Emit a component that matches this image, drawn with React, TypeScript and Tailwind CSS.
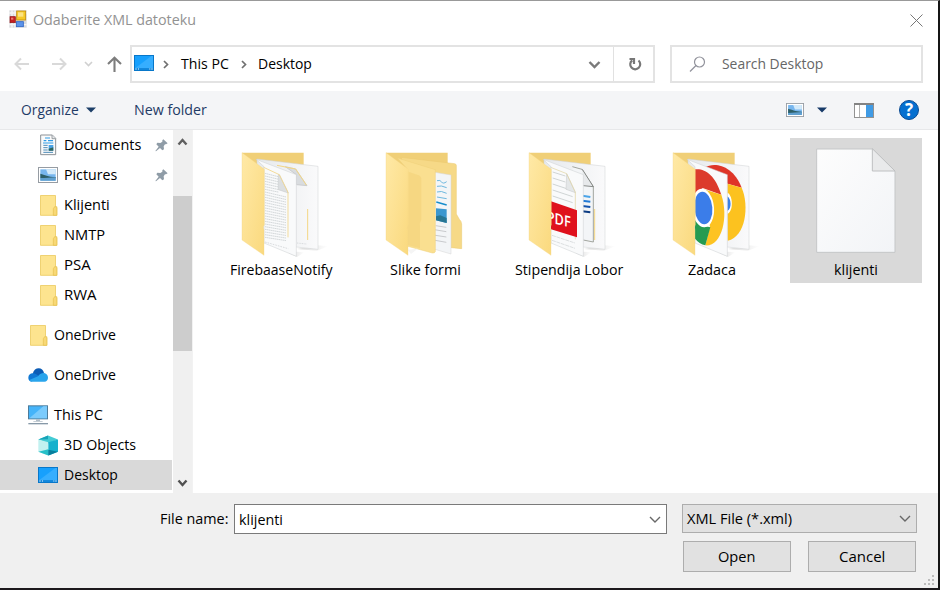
import { useLayoutEffect, useRef, useState, type ReactNode } from "react";

/** Text squeezed horizontally to an exact advance width. */
function Fit({ w, children, className = "" }: { w: number; children: string; className?: string }) {
  const ref = useRef<HTMLSpanElement>(null);
  const [scale, setScale] = useState(1);
  useLayoutEffect(() => {
    if (ref.current) setScale(w / ref.current.offsetWidth);
  }, [w, children]);
  return (
    <span className={`inline-block shrink-0 ${className}`} style={{ width: w }}>
      <span
        ref={ref}
        className="inline-block origin-left whitespace-nowrap"
        style={{ transform: `translateY(-1px) scaleX(${scale})` }}
      >
        {children}
      </span>
    </span>
  );
}

function AppIcon() {
  return (
    <svg width="18" height="18" viewBox="0 0 54 54" className="shrink-0">
      <rect x="1" y="1" width="52" height="52" fill="#d8dadd" />
      <path d="M1 9H53M1 44H53M9 1V53M18 1V53" stroke="#f6f6f6" strokeWidth="4" />
      <rect x="3" y="20" width="16" height="18" fill="#c51f20" stroke="#8e1010" strokeWidth="2" />
      <rect x="6" y="23" width="7" height="6" fill="#ee7a6d" />
      <rect x="23" y="3" width="27" height="27" fill="#f5c928" stroke="#c28e0c" strokeWidth="2.5" />
      <rect x="27" y="7" width="16" height="13" fill="#fbe383" />
      <rect x="22" y="35" width="21" height="15" fill="#5b93ea" stroke="#2f66c4" strokeWidth="2.5" />
    </svg>
  );
}

function DesktopIcon() {
  return (
    <svg width="20" height="16" viewBox="0 0 60 48" preserveAspectRatio="none" className="shrink-0">
      <rect x="1.5" y="1.5" width="57" height="45" fill="#17a0fd" stroke="#0877c9" strokeWidth="3" />
      <path d="M3 40L52 3H57V40Z" fill="#36aeff" />
      <path d="M3 42H57" stroke="#0b6fbd" strokeWidth="3" />
      <path d="M4 42H8M12 42H15M46 42H49M52 42H56" stroke="#e8f5ff" strokeWidth="3" />
    </svg>
  );
}

function FolderIcon() {
  return (
    <svg width="20" height="22" viewBox="0 0 60 66" className="shrink-0">
      <path d="M7.500 4.500H52.500V38L56.500 41V64H7.500Z" fill="#fde48f" stroke="#eccb62" strokeWidth="2.500" />
      <path d="M46 64V44L50 38H56.500V64Z" fill="#f8d875" stroke="#e5bf4b" strokeWidth="2" />
    </svg>
  );
}

function DocumentIcon() {
  return (
    <svg width="20" height="22" viewBox="0 0 60 66" className="shrink-0">
      <path d="M8 3H43L53 13V62H8Z" fill="#fafafa" stroke="#8b9196" strokeWidth="3" />
      <path d="M42 3V14H53" fill="#e6e8ea" stroke="#8b9196" strokeWidth="2.500" />
      <path d="M21 12H36M17 20H25M30 20H45M15 27H46" stroke="#2e9be6" strokeWidth="3.500" />
      <path d="M16 34H29M16 41H29M16 48H29M16 55H45" stroke="#4c8bb8" strokeWidth="3" />
      <rect x="32" y="33" width="14" height="17" fill="#4aa3e6" />
      <path d="M32 44L46 40V50H32Z" fill="#2d655c" />
    </svg>
  );
}

function PictureIcon({ w = 20, h = 16 }: { w?: number; h?: number }) {
  return (
    <svg width={w} height={h} viewBox="0 0 60 48" preserveAspectRatio="none" className="shrink-0">
      <rect x="1.500" y="1.500" width="57" height="45" fill="#fff" stroke="#969ca3" strokeWidth="3" />
      <rect x="7" y="7" width="46" height="34" fill="#77b6ee" />
      <path d="M24 7H53V22H30Z" fill="#d3eafa" />
      <path d="M7 20C20 23 30 30 53 30V34H7Z" fill="#2d5f68" />
      <path d="M7 34L53 31V41H7Z" fill="#5f9fcf" />
    </svg>
  );
}

function CloudIcon() {
  return (
    <svg width="20" height="14" viewBox="0 0 60 42" className="shrink-0">
      <path d="M14 17C17 6 24 1 32 1C40 1 46 7 48 15L30 30Z" fill="#0b5cb5" />
      <path d="M1 29C1 20 8 15 16 16C22 16 26 20 36 26L10 41C4 39 1 35 1 29Z" fill="#0f78d4" />
      <path d="M30 25C36 16 43 14 49 15C56 17 60 22 60 29C60 36 56 41 49 41H13C8 41 5 38 4 36Z" fill="#2aa5ec" />
    </svg>
  );
}

function PcIcon() {
  return (
    <svg width="20" height="20" viewBox="0 0 60 60" className="shrink-0">
      <rect x="1.500" y="2.500" width="57" height="39" fill="#45b4fa" stroke="#4d7b99" strokeWidth="3" />
      <path d="M4 40L46 4H57V40Z" fill="#7bcbfc" />
      <path d="M24 43H36V48H44V50H16V48H24Z" fill="#b2bec8" />
      <path d="M1 56H60" stroke="#8799a8" strokeWidth="4" />
    </svg>
  );
}

function CubeIcon() {
  return (
    <svg width="20" height="21" viewBox="0 0 60 62" className="shrink-0">
      <path d="M1 13L30 1L60 13L31 25Z" fill="#43cbd4" />
      <path d="M1 13L31 21V61L1 50Z" fill="#c2f1f0" />
      <path d="M31 21L60 13V50L31 61Z" fill="#16b1cd" />
      <path d="M1 50L31 42V61Z" fill="#27c0c8" />
      <path d="M31 44L60 50L31 61Z" fill="#087f9d" />
      <path d="M1 13L30 1V12Z" fill="#18a3b8" />
    </svg>
  );
}

function PinIcon() {
  return (
    <svg width="13" height="13" viewBox="0 0 39 39" className="shrink-0">
      <path d="M25 1L38 13L33 16L30 16L26 22L27 31L22 34L15 27L3 37L1 36L11 23L4 16L7 11L16 12L22 8L22 4Z" fill="#8f9ca7" />
    </svg>
  );
}

function Chevron({ className, d, w, h, sw }: { className: string; d: string; w: number; h: number; sw: number }) {
  return (
    <svg width={w} height={h} viewBox={`0 0 ${w} ${h}`} className={`shrink-0 ${className}`} fill="none" stroke="currentColor" strokeWidth={sw}>
      <path d={d} />
    </svg>
  );
}

function BackPanel() {
  return (
    <>
      <defs>
        <linearGradient id="flap" x1="0" y1="0" x2="1" y2="1">
          <stop offset="0" stopColor="#ffe9a6" />
          <stop offset="1" stopColor="#fad97e" />
        </linearGradient>
        <linearGradient id="sheet" x1="0" y1="0" x2="1" y2="0">
          <stop offset="0" stopColor="#e6e9ec" />
          <stop offset="1" stopColor="#fafafb" />
        </linearGradient>
        <linearGradient id="shade" x1="0" y1="0" x2="1" y2="0">
          <stop offset="0" stopColor="#bbb" stopOpacity=".55" />
          <stop offset="1" stopColor="#bbb" stopOpacity="0" />
        </linearGradient>
      </defs>
      <path d="M65 38H250V120L110 300H65Z" fill="#f0cf77" />
    </>
  );
}

function Flap() {
  return (
    <path d="M65 38L132 88V255Q127 260 131 270V346L65 300Z" fill="url(#flap)" stroke="#f5d88a" strokeWidth="1" />
  );
}

function Sheets({ back, front }: { back?: ReactNode; front?: ReactNode }) {
  return (
    <>
      <path d="M293 316L324 319L290 332L230 327Z" fill="url(#shade)" />
      <path d="M228 335L252 337L230 351L205 340Z" fill="url(#shade)" />
      <path d="M110 57L293 79V328L228 321L110 300Z" fill="url(#sheet)" stroke="#cfd1d3" strokeWidth="1.500" />
      {back}
      <path d="M107 58L228 104V349L131 309V80Z" fill="#f9fafb" stroke="#cbced0" strokeWidth="1.500" />
      {front}
    </>
  );
}

function TextSheets() {
  const rows = Array.from({ length: 25 }, (_, i) => i);
  return (
    <Sheets
      back={
        <>
          <path d="M195 80L226 87L260 137L228 134V104Z" fill="#d9dcdf" stroke="#bfc1c3" strokeWidth="2" />
          <path d="M170 76L226 87L258 135M262 207V300" fill="none" stroke="#f3d684" strokeWidth="3" />
          <path d="M230 309L258 312" stroke="#c9cccf" strokeWidth="2" strokeDasharray="3 2" />
        </>
      }
      front={
        <>
          {rows.map((i) => (
            <path key={i} d={`M134 ${100 + i * 8}L${i < 7 ? 174 : 197} ${(i < 7 ? 110 : 117) + i * 7.7}`} stroke="#cdd1d4" strokeWidth="2.500" strokeDasharray="5 1" />
          ))}
          <path d="M177 104L204 159L174 149V104Z" fill="#dcdfe1" stroke="#c4c6c8" strokeWidth="1.500" />
          <path d="M130 82L177 104L203 157V292" fill="none" stroke="#f2d587" strokeWidth="2.500" />
          <path d="M134 306L204 326" stroke="#c9cccf" strokeWidth="2" strokeDasharray="5 3" />
        </>
      }
    />
  );
}

function PdfSheets() {
  return (
    <Sheets
      back={
        <>
          <path d="M195 80L224 88L258 140V306L228 300" fill="#f3f5f7" stroke="#92958d" strokeWidth="2.500" />
          <path d="M225 88L258 140L228 137" fill="#e7e9eb" stroke="#767a77" strokeWidth="2.500" />
          <path d="M225 167L249 171" stroke="#4ba4e8" strokeWidth="6" />
          <path d="M225 182L249 185" stroke="#247bd6" strokeWidth="6" />
          <path d="M225 198L249 201" stroke="#1554ad" strokeWidth="6" />
          <path d="M225 214L249 217" stroke="#0c3b82" strokeWidth="6" />
          <path d="M262 207V300" stroke="#f3d684" strokeWidth="3" />
        </>
      }
      front={
        <>
          {[96, 114, 132, 150, 168].map((y) => (
            <path key={y} d={`M136 ${y}L${y < 130 ? 174 : 196} ${y + (y < 130 ? 12 : 20)}`} stroke="#c7cccd" strokeWidth="2.500" />
          ))}
          <path d="M178 101L204 158L176 148Z" fill="#e4e7e8" stroke="#c4c6c8" strokeWidth="1.500" />
          <path d="M130 82L178 101L204 156V298" fill="none" stroke="#dfd29b" strokeWidth="2" />
          <path d="M131 184L209 211V292L131 268Z" fill="#df111c" />
          <text transform="matrix(.88 .2 0 1 118 246)" className="fill-white font-['Open_Sans',sans-serif] text-[46px] font-semibold" textLength="82" lengthAdjust="spacingAndGlyphs">
            PDF
          </text>
          <path d="M134 286L203 309M134 301L203 325" stroke="#cbd0d1" strokeWidth="2" strokeDasharray="12 2" />
        </>
      }
    />
  );
}

function ChromeSheets() {
  return (
    <Sheets
      back={
        <>
          <path d="M160 82C190 65 245 75 271 143L229 131L207 120Z" fill="#df3528" />
          <path d="M228 131L271 143C294 195 284 290 229 302Z" fill="#fcc21f" />
          <path d="M228 158C244 164 248 211 228 222Z" fill="#fff" />
          <path d="M228 169C240 176 242 206 228 213Z" fill="#397fe6" />
        </>
      }
      front={
        <>
          <path d="M131 88C160 84 192 105 210 164L154 144L131 170Z" fill="#dc3a2c" />
          <path d="M155 147L210 164C233 232 211 320 162 316L176 260Z" fill="#fdc322" />
          <path d="M131 239L147 256L177 262L162 316Q144 313 130 295Z" fill="#259b51" />
          <ellipse cx="155" cy="204" rx="33" ry="58" transform="rotate(-5 155 204)" fill="#fff" />
          <ellipse cx="156" cy="204" rx="27" ry="49" transform="rotate(-5 156 204)" fill="#3b7de9" />
        </>
      }
    />
  );
}

function NestedFolder() {
  return (
    <>
      <path d="M110 52L271 71Q275 71 276 76V222L285 238Q292 244 292 252V326L210 318Z" fill="#f6d987" stroke="#ebc96f" strokeWidth="1.500" />
      <path d="M211 97L260 105V342L205 326Z" fill="#f3f5f7" stroke="#d4d5d5" strokeWidth="1.500" />
      <path d="M218 122Q228 119 232 126T247 125M218 139Q230 135 247 143M218 156Q230 151 247 160M218 171L247 176" fill="none" stroke="#6db8df" strokeWidth="3" />
      <path d="M216 186L247 195" stroke="#168dcc" strokeWidth="4" />
      <path d="M215 205L247 208V249L215 241Z" fill="#3b97cf" />
      <path d="M215 229L228 226L247 234V249L215 241Z" fill="#287693" />
      <path d="M214 257L246 262M210 269L246 275M207 285L246 291M207 300L246 307" stroke="#b2b4b7" strokeWidth="2" />
      <path d="M99 54L213 89V335Q211 340 204 339L127 318V85Z" fill="#fadf90" stroke="#efd07a" strokeWidth="1.500" />
      <path d="M128 94L163 106Q172 110 171 120V239Q165 247 167 260V325L128 315Z" fill="#f3d27a" opacity=".6" />
      <path d="M130 329L160 326L140 342Z" fill="#f5f5f5" />
    </>
  );
}

function FolderArt({ children }: { children: ReactNode }) {
  return (
    <svg width="132" height="120" viewBox="0 0 396 360" className="block">
      <g transform="translate(13 6)">
        <BackPanel />
        {children}
        <Flap />
      </g>
    </svg>
  );
}

function FileArt() {
  return (
    <svg width="132" height="120" viewBox="0 0 396 360" className="block">
      <defs>
        <linearGradient id="page" x1="0" y1="0" x2="1" y2="1">
          <stop offset="0" stopColor="#fdfdfd" />
          <stop offset="1" stopColor="#f2f4f7" />
        </linearGradient>
      </defs>
      <path d="M80 33H247L315 99V343H80Z" fill="url(#page)" stroke="#c5c7c8" strokeWidth="3" />
      <path d="M247 32V99H315Z" fill="#e9eaeb" stroke="#bec0c1" strokeWidth="3" />
    </svg>
  );
}

function Tile({ art, name, w, selected = false }: { art: ReactNode; name: string; w: number; selected?: boolean }) {
  return (
    <div className={`h-[145px] w-[132px] shrink-0 ${selected ? "bg-[#d9d9d9]" : ""}`}>
      {art}
      <div className="flex h-6 items-center justify-center pr-px">
        <Fit w={w}>{name}</Fit>
      </div>
    </div>
  );
}

function Row({ icon, name, w, level = 2, pin = false, selected = false, gap = false }: {
  icon: ReactNode; name: string; w: number; level?: number; pin?: boolean; selected?: boolean; gap?: boolean;
}) {
  return (
    <div className={`flex h-[30px] w-[172px] shrink-0 items-center ${level === 2 ? "pl-[38px]" : "pl-7"} ${gap ? "mt-2.5" : ""} ${selected ? "bg-[#d9d9d9]" : ""}`}>
      <span className="flex w-5 shrink-0 items-center">{icon}</span>
      <Fit w={w} className="ml-1.5">{name}</Fit>
      {pin && <span className="mr-1 ml-auto"><PinIcon /></span>}
    </div>
  );
}

export default function App() {
  return (
    <div className="flex h-[590px] w-[940px] flex-col overflow-hidden border-t border-r-2 border-b-2 border-t-[#999] border-r-[#151515] border-b-[#1c191c] bg-white font-['Open_Sans','Noto_Sans',sans-serif] text-[15px] leading-5 text-black">
      <header className="flex h-11 shrink-0 items-start pt-[9px] pl-[9px]">
        <AppIcon />
        <Fit w={163} className="ml-1.5 text-[#929292]">Odaberite XML datoteku</Fit>
        <Chevron className="mt-1 mr-[15px] ml-auto text-[#777]" w={13} h={13} sw={1} d="M.5.5L12.500 12.500M12.500.5L.5 12.500" />
      </header>

      <nav className="flex h-[46px] shrink-0 items-start">
        <div className="flex h-[38px] w-[130px] shrink-0 items-center pl-3.5">
          <Chevron className="text-[#d9d9d9]" w={16} h={14} sw={2} d="M15 7H1.500M7 1.500L1.500 7L7 12.500" />
          <Chevron className="ml-[21px] text-[#d9d9d9]" w={16} h={14} sw={2} d="M1 7H14.500M9 1.500L14.500 7L9 12.500" />
          <Chevron className="ml-[17px] text-[#d0d0d0]" w={9} h={6} sw={1.6} d="M1 1L4.500 4.500L8 1" />
          <Chevron className="ml-3.5 text-[#7d7d7d]" w={15} h={16} sw={2.1} d="M7.500 16V2M1 8L7.500 1.800L14 8" />
        </div>
        <div className="flex h-[38px] w-[525px] shrink-0 items-center border-2 border-[#e3e3e3] pl-0.5">
          <span className="pb-0.5"><DesktopIcon /></span>
          <Chevron className="ml-[9px] text-[#707070]" w={6} h={9} sw={1.7} d="M1 1L4.500 4.500L1 8" />
          <Fit w={48} className="ml-[12px]">This PC</Fit>
          <Chevron className="ml-[12px] text-[#707070]" w={6} h={9} sw={1.7} d="M1 1L4.500 4.500L1 8" />
          <Fit w={54} className="ml-[11px]">Desktop</Fit>
          <Chevron className="mt-0.5 mr-[12px] ml-auto text-[#7a7a7a]" w={13} h={8} sw={2.4} d="M1.500 1L6.500 6L11.500 1" />
          <div className="flex h-full w-10 items-center justify-center border-l border-[#e1e1e1] pl-[3px]">
            <svg width="15" height="15" viewBox="0 0 15 15" fill="none" stroke="#777" strokeWidth="2.200">
              <path d="M10.500 3.500A5 5 0 1 1 4.200 3.300M1.500 2H6V7" />
            </svg>
          </div>
        </div>
        <div className="ml-[15px] flex h-[38px] w-[253px] items-center border-2 border-[#e3e3e3] pl-[17px]">
          <svg width="17" height="17" viewBox="0 0 17 17" fill="none" stroke="#92939c" strokeWidth="1.200">
            <circle cx="10.500" cy="6" r="5" />
            <path d="M7 9.500L1 15.500" />
          </svg>
          <Fit w={101} className="ml-4 text-[#666]">Search Desktop</Fit>
        </div>
      </nav>

      <div className="flex h-[39px] shrink-0 items-center border-b border-[#e7e8ea] bg-[#f4f5f7] pl-[21px] text-[#1f3b66]">
        <Fit w={58}>Organize</Fit>
        <svg width="10" height="6" viewBox="0 0 10 6" className="ml-[7px]"><path d="M0 .5H10L5 5.500Z" fill="#1d3f68" /></svg>
        <Fit w={73} className="ml-[38px]">New folder</Fit>
        <div className="mr-[19px] ml-auto flex items-center">
          <PictureIcon w={18} h={14} />
          <svg width="10" height="6" viewBox="0 0 10 6" className="ml-[13px]"><path d="M0 .5H10L5 5.500Z" fill="#173a68" /></svg>
          <svg width="20" height="15" viewBox="0 0 20 15" className="ml-[27px]">
            <rect x=".5" y=".5" width="19" height="14" fill="#fff" stroke="#929292" />
            <path d="M0 1H20" stroke="#838383" strokeWidth="2" />
            <path d="M5.500 2V14" stroke="#b2b2b2" />
            <rect x="12" y="2" width="7" height="12" fill="#409be5" />
          </svg>
          <span className="ml-[25px] flex size-5 items-center justify-center rounded-full border border-[#0b4b93] bg-[#0670d0] text-[17px] font-bold text-white">?</span>
        </div>
      </div>

      <main className="flex h-[363px] shrink-0">
        <aside className="flex w-[173px] shrink-0 flex-col">
          <Row icon={<DocumentIcon />} name="Documents" w={77} pin />
          <Row icon={<PictureIcon />} name="Pictures" w={53} pin />
          <Row icon={<FolderIcon />} name="Klijenti" w={45.5} />
          <Row icon={<FolderIcon />} name="NMTP" w={41} />
          <Row icon={<FolderIcon />} name="PSA" w={27} />
          <Row icon={<FolderIcon />} name="RWA" w={33} />
          <Row icon={<FolderIcon />} name="OneDrive" w={62} level={1} gap />
          <Row icon={<CloudIcon />} name="OneDrive" w={62} level={1} gap />
          <Row icon={<PcIcon />} name="This PC" w={49} level={1} gap />
          <Row icon={<CubeIcon />} name="3D Objects" w={72} />
          <Row icon={<DesktopIcon />} name="Desktop" w={54} selected />
        </aside>
        <div className="flex w-[19px] shrink-0 flex-col items-center bg-[#f0f0f0]">
          <Chevron className="mt-2 text-[#606060]" w={11} h={8} sw={2.4} d="M1.500 6.500L5.500 2L9.500 6.500" />
          <div className="mt-[50px] h-[155px] w-full bg-[#cdcdcd]" />
          <Chevron className="mt-auto mb-[6px] text-[#505050]" w={11} h={8} sw={2.4} d="M1.500 1.500L5.500 6L9.500 1.500" />
        </div>
        <section className="flex items-start gap-[11.5px] border-l border-[#f2f2f2] pt-2 pl-[23px]">
          <Tile art={<FolderArt><TextSheets /></FolderArt>} name="FirebaaseNotify" w={103} />
          <Tile art={<FolderArt><NestedFolder /></FolderArt>} name="Slike formi" w={71} />
          <Tile art={<FolderArt><PdfSheets /></FolderArt>} name="Stipendija Lobor" w={108} />
          <Tile art={<FolderArt><ChromeSheets /></FolderArt>} name="Zadaca" w={48} />
          <Tile art={<FileArt />} name="klijenti" w={44} selected />
        </section>
      </main>

      <footer className="flex grow flex-col bg-[#f0f0f0]">
        <div className="flex items-start pt-[11px] pl-[160px]">
          <Fit w={68} className="mt-[5px]">File name:</Fit>
          <div className="ml-1.5 flex h-[30px] w-[433px] items-center border border-[#7a7a7a] bg-white pr-[5px] pl-1">
            <Fit w={44} className="mt-0.5">klijenti</Fit>
            <Chevron className="ml-auto text-[#686868]" w={12} h={7} sw={1.4} d="M1 1L6 6L11 1" />
          </div>
          <div className="ml-[15px] flex h-[29px] w-[235px] items-center border border-[#adadad] bg-[#e1e1e1] pr-[5px] pl-1">
            <Fit w={105}>XML File (*.xml)</Fit>
            <Chevron className="ml-auto text-[#686868]" w={12} h={7} sw={1.4} d="M1 1L6 6L11 1" />
          </div>
        </div>
        <div className="mt-[7px] flex pl-[683px]">
          <button className="flex h-[31px] w-[108px] items-center justify-center border border-[#adadad] bg-[#e1e1e1] pr-0.5"><Fit w={37}>Open</Fit></button>
          <button className="ml-[17px] flex h-[31px] w-[108px] items-center justify-center border border-[#adadad] bg-[#e1e1e1]"><Fit w={46}>Cancel</Fit></button>
        </div>
        <svg width="12" height="12" viewBox="0 0 12 12" className="mt-[3px] mr-[2px] ml-auto shrink-0" fill="#bcbcbc">
          <path d="M8 0h2v2H8zM4 4h2v2H4zM8 4h2v2H8zM0 8h2v2H0zM4 8h2v2H4zM8 8h2v2H8z" />
        </svg>
      </footer>
    </div>
  );
}
